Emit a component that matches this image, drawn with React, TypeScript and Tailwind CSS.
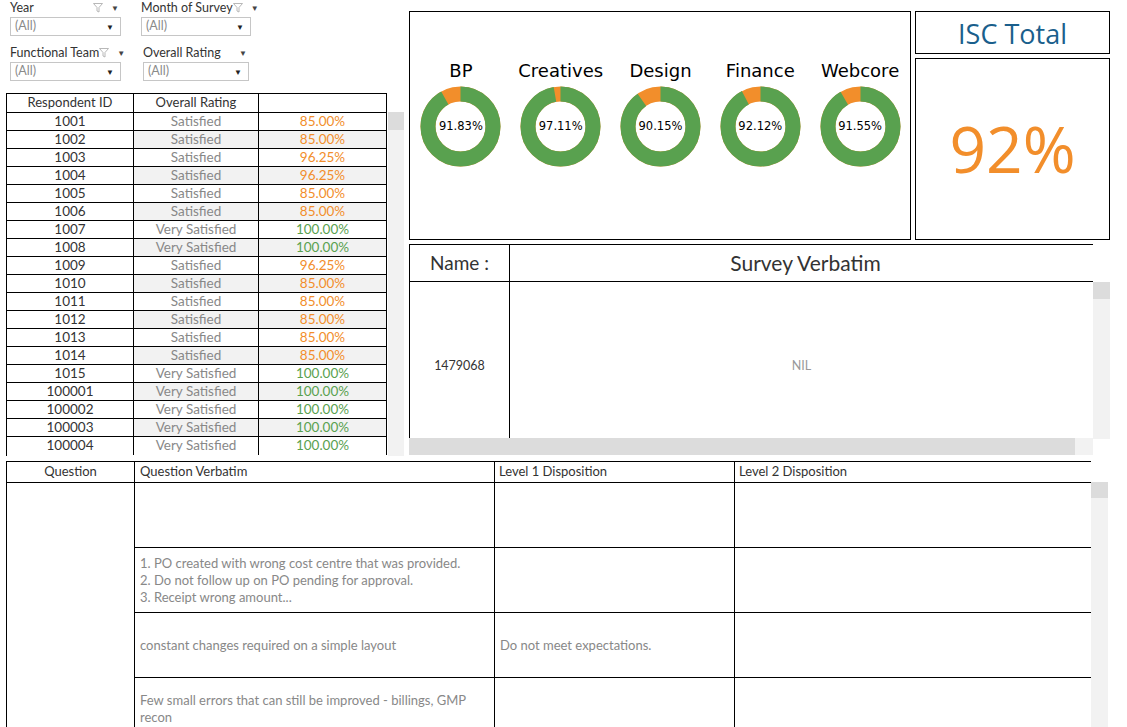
import React from 'react';

type Row = { id: string; rating: string; pct: string };

const ROWS: Row[] = [
  { id: '1001', rating: 'Satisfied', pct: '85.00%' },
  { id: '1002', rating: 'Satisfied', pct: '85.00%' },
  { id: '1003', rating: 'Satisfied', pct: '96.25%' },
  { id: '1004', rating: 'Satisfied', pct: '96.25%' },
  { id: '1005', rating: 'Satisfied', pct: '85.00%' },
  { id: '1006', rating: 'Satisfied', pct: '85.00%' },
  { id: '1007', rating: 'Very Satisfied', pct: '100.00%' },
  { id: '1008', rating: 'Very Satisfied', pct: '100.00%' },
  { id: '1009', rating: 'Satisfied', pct: '96.25%' },
  { id: '1010', rating: 'Satisfied', pct: '85.00%' },
  { id: '1011', rating: 'Satisfied', pct: '85.00%' },
  { id: '1012', rating: 'Satisfied', pct: '85.00%' },
  { id: '1013', rating: 'Satisfied', pct: '85.00%' },
  { id: '1014', rating: 'Satisfied', pct: '85.00%' },
  { id: '1015', rating: 'Very Satisfied', pct: '100.00%' },
  { id: '100001', rating: 'Very Satisfied', pct: '100.00%' },
  { id: '100002', rating: 'Very Satisfied', pct: '100.00%' },
  { id: '100003', rating: 'Very Satisfied', pct: '100.00%' },
  { id: '100004', rating: 'Very Satisfied', pct: '100.00%' },
];

const TEAMS = [
  { name: 'BP', value: 91.83 },
  { name: 'Creatives', value: 97.11 },
  { name: 'Design', value: 90.15 },
  { name: 'Finance', value: 92.12 },
  { name: 'Webcore', value: 91.55 },
];

const QUESTIONS: { verbatim: string[]; level1: string; top?: boolean }[] = [
  { verbatim: [], level1: '' },
  {
    verbatim: [
      '1. PO created with wrong cost centre that was provided.',
      '2. Do not follow up on PO pending for approval.',
      '3. Receipt wrong amount...',
    ],
    level1: '',
  },
  { verbatim: ['constant changes required on a simple layout'], level1: 'Do not meet expectations.' },
  { verbatim: ['Few small errors that can still be improved - billings, GMP', 'recon'], level1: '', top: true },
];

function Funnel() {
  return (
    <svg width="10" height="10" viewBox="0 0 10 10" className="shrink-0">
      <path d="M0.5 0.5 H9.5 L6 4.5 V9 L4 8 V4.5 Z" fill="none" stroke="#b0b0b0" strokeWidth="0.9" />
    </svg>
  );
}

function Filter({ label, width, icon }: { label: string; width: string; icon?: boolean }) {
  return (
    <div className={`flex flex-col ${width}`}>
      <div className="flex h-[14px] items-center text-[12.5px] leading-none text-[#333]">
        <span className="whitespace-nowrap">{label}</span>
        <span className="ml-auto flex items-center gap-[8px] pr-[2px]">
          {icon && <Funnel />}
          <span className="text-[8px] text-[#444]">▼</span>
        </span>
      </div>
      <div className="mt-[2px] flex h-[19px] items-center border border-[#c6c6c6] pl-[4px] pr-[6px] text-[12.5px] text-[#8a8a8a]">
        <span>(All)</span>
        <span className="ml-auto text-[8px] text-[#222]">▼</span>
      </div>
    </div>
  );
}

function Donut({ name, value }: { name: string; value: number }) {
  const r = 32.5;
  const c = 2 * Math.PI * r;
  const green = (value / 100) * c;
  return (
    <div className="flex w-[100px] flex-col items-center">
      <div className="text-[18px] leading-[22px] text-black [font-family:'DejaVu_Sans',sans-serif]">{name}</div>
      <div className="relative mt-[4px] h-[81px] w-[81px]">
        <svg width="81" height="81" viewBox="0 0 81 81">
          <g transform="rotate(-90 40.5 40.5)">
            <circle cx="40.5" cy="40.5" r={r} fill="none" stroke="#f28e2b" strokeWidth="15" />
            <circle
              cx="40.5"
              cy="40.5"
              r={r}
              fill="none"
              stroke="#59a14f"
              strokeWidth="15"
              strokeDasharray={`${green} ${c}`}
            />
          </g>
        </svg>
        <div className="absolute inset-0 flex items-center justify-center text-[11.5px] text-black [font-family:'DejaVu_Sans',sans-serif]">
          {value.toFixed(2)}%
        </div>
      </div>
    </div>
  );
}

export default function App() {
  return (
    <div className="relative h-[727px] w-[1127px] overflow-hidden bg-white text-[#333] [font-family:Lato,'Noto_Sans',sans-serif]">
      <div className="flex">
        {/* left column: filters + respondent table */}
        <div className="w-[409px] shrink-0">
          <div className="flex gap-[20px] pl-[10px] pt-[1px]">
            <Filter label="Year" width="w-[111px]" icon />
            <Filter label="Month of Survey" width="w-[110px]" icon />
          </div>
          <div className="mt-[10px] flex gap-[22px] pl-[10px]">
            <Filter label="Functional Team" width="w-[111px]" icon />
            <Filter label="Overall Rating" width="w-[106px]" />
          </div>

          <div className="ml-[6px] mt-[12px] flex">
            <div className="w-[381px] border-l border-t border-black">
              <div className="flex h-[19px] border-b border-black text-[13px] text-[#333]">
                <div className="flex w-[127px] items-center justify-center border-r border-black">Respondent ID</div>
                <div className="flex w-[125px] items-center justify-center border-r border-black">Overall Rating</div>
                <div className="w-[128px] border-r border-black" />
              </div>
              {ROWS.map((row, i) => (
                <div
                  key={row.id}
                  className={`flex h-[18px] text-[13.5px] leading-none ${i < ROWS.length - 1 ? 'border-b border-black' : ''}`}
                >
                  <div className="flex w-[127px] items-center justify-center border-r border-black text-[#333]">{row.id}</div>
                  <div
                    className={`flex w-[125px] items-center justify-center border-r border-black text-[#888] ${i % 2 === 1 ? 'bg-[#f2f2f2]' : ''}`}
                  >
                    {row.rating}
                  </div>
                  <div
                    className={`flex w-[128px] items-center justify-center border-r border-black ${row.pct === '100.00%' ? 'text-[#59a14f]' : 'text-[#f28e2b]'} ${i % 2 === 1 ? 'bg-[#f2f2f2]' : ''}`}
                  >
                    {row.pct}
                  </div>
                </div>
              ))}
            </div>
            <div className="mt-[19px] ml-[1px] h-[344px] w-[16px] bg-[#f2f2f2]">
              <div className="h-[18px] bg-[#dcdcdc]" />
            </div>
          </div>
        </div>

        {/* right column */}
        <div className="w-[718px] shrink-0 pt-[11px]">
          <div className="flex gap-[4px]">
            <div className="flex h-[229px] w-[502px] items-start justify-center border border-black pl-[1px] pt-[48px]">
              {TEAMS.map((t) => (
                <Donut key={t.name} name={t.name} value={t.value} />
              ))}
            </div>
            <div className="flex w-[195px] flex-col gap-[4px]">
              <div className="flex h-[43px] items-center justify-center border border-black pt-[4px] text-[27px] text-[#1a5f8c] [font-family:'Open_Sans',sans-serif]">
                ISC Total
              </div>
              <div className="flex h-[182px] items-center justify-center border border-black text-[64px] text-[#f28e2b] [font-family:'Open_Sans',sans-serif]">
                92%
              </div>
            </div>
          </div>

          <div className="mt-[4px] w-[684px] border-t border-black" />
          <div className="flex">
            <div className="w-[684px]">
              <div className="flex h-[37px] border-b border-l border-black text-[19px] text-[#333]">
                <div className="flex w-[100px] items-center justify-center border-r border-black">Name :</div>
                <div className="flex flex-1 items-center justify-center pl-[8px] text-[21px]">Survey Verbatim</div>
              </div>
              <div className="flex h-[156px] border-l border-black text-[12.5px]">
                <div className="flex w-[100px] items-center justify-center border-r border-black pt-[12px] text-[#333]">1479068</div>
                <div className="flex flex-1 items-center justify-center pt-[12px] text-[#999]">NIL</div>
              </div>
              <div className="flex h-[17px]">
                <div className="flex-1 bg-[#dcdcdc]" />
                <div className="w-[18px] bg-[#f2f2f2]" />
              </div>
            </div>
            <div className="mt-[37px] h-[157px] w-[17px] bg-[#f2f2f2]">
              <div className="h-[17px] bg-[#dcdcdc]" />
            </div>
          </div>
        </div>
      </div>

      {/* bottom question table */}
      <div className="ml-[6px] mt-[5px] flex">
        <div className="w-[1085px]">
          <div className="flex h-[22px] border-y border-l border-black text-[13px] text-[#333]">
            <div className="flex w-[128px] items-center justify-center border-r border-black">Question</div>
            <div className="flex w-[360px] items-center border-r border-black pl-[5px]">Question Verbatim</div>
            <div className="flex w-[240px] items-center border-r border-black pl-[4px]">Level 1 Disposition</div>
            <div className="flex flex-1 items-center pl-[4px]">Level 2 Disposition</div>
          </div>
          <div className="flex border-l border-black">
            <div className="w-[128px] border-r border-black" />
            <div className="flex-1">
              {QUESTIONS.map((q, i) => (
                <div key={i} className="flex h-[65px] border-b border-black text-[13px] leading-[17px] text-[#888]">
                  <div
                    className={`flex w-[360px] flex-col border-r border-black pl-[5px] ${q.top ? 'justify-start pt-[14px]' : 'justify-center'}`}
                  >
                    {q.verbatim.map((line) => (
                      <div key={line}>{line}</div>
                    ))}
                  </div>
                  <div className="flex w-[240px] items-center border-r border-black pl-[5px]">{q.level1}</div>
                  <div className="flex-1" />
                </div>
              ))}
            </div>
          </div>
        </div>
        <div className="mt-[21px] h-[250px] w-[17px] bg-[#f2f2f2]">
          <div className="h-[16px] bg-[#dcdcdc]" />
        </div>
      </div>
    </div>
  );
}
